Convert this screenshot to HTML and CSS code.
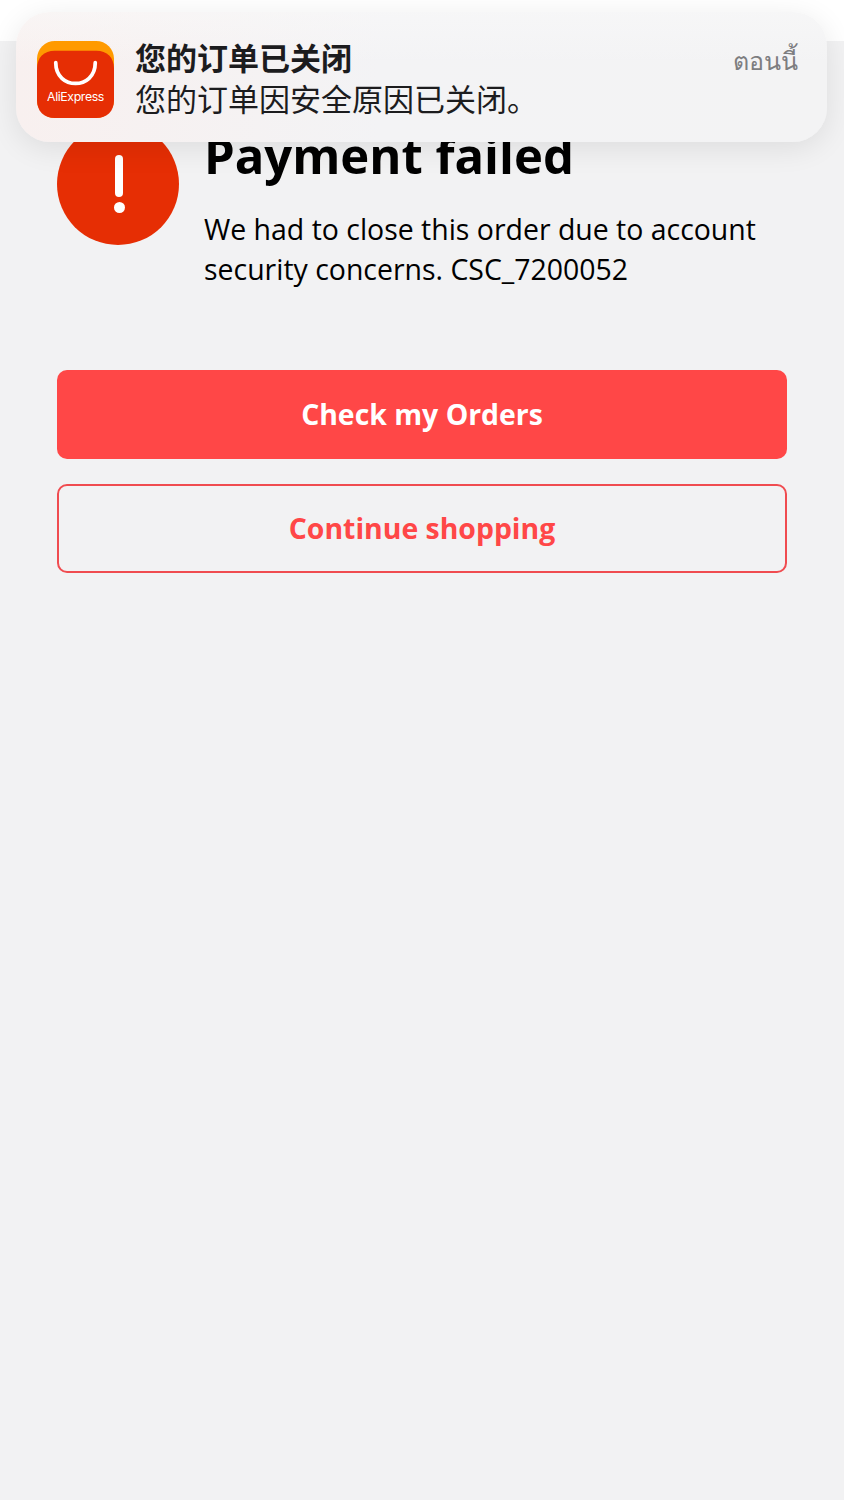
FILE: index.html
```html
<!DOCTYPE html>
<html lang="en">
<head>
    <meta charset="UTF-8">
    <meta name="viewport" content="width=device-width, initial-scale=1.0">
    <title>Payment failed</title>
    <link rel="stylesheet" href="styles.css">
</head>
<body>
    <div class="top-bar"></div>

    <!-- Push notification over the page -->
    <div class="notification">
        <svg class="app-icon" viewBox="0 0 78 78" aria-hidden="true">
            <rect width="78" height="78" rx="18" fill="#ff9a00"/>
            <path d="M0 28C0 17 7 10 18 10H60C71 10 78 17 78 28V60C78 71 71 78 60 78H18C7 78 0 71 0 60Z" fill="#e62e04"/>
            <path d="M19 22C19 50 59 50 59 22" fill="none" stroke="#fff" stroke-width="3.8" stroke-linecap="round"/>
            <text x="39" y="61" text-anchor="middle" class="app-icon-label">AliExpress</text>
        </svg>
        <div class="notification-text">
            <div class="notification-title">您的订单已关闭</div>
            <div class="notification-body">您的订单因安全原因已关闭。</div>
        </div>
        <div class="notification-time">ตอนนี้</div>
    </div>

    <div class="content">
        <div class="result">
            <div class="result-icon">
                <span class="result-icon-bar"></span>
                <span class="result-icon-dot"></span>
            </div>
            <div class="result-text">
                <h1>Payment failed</h1>
                <p>We had to close this order due to account security concerns. CSC_7200052</p>
            </div>
        </div>

        <div class="actions">
            <button class="btn btn-primary">Check my Orders</button>
            <button class="btn btn-outline">Continue shopping</button>
        </div>
    </div>
</body>
</html>
```

FILE: styles.css
```css
* {
    box-sizing: border-box;
    margin: 0;
    padding: 0;
}

body {
    position: relative;
    min-height: 1500px;
    background: #f2f2f3;
    font-family: "Open Sans", "Noto Sans", sans-serif;
    color: #000;
    overflow: hidden;
}

.top-bar {
    height: 41px;
    background: #fff;
}

/* Notification */
.notification {
    position: absolute;
    top: 12px;
    left: 16px;
    width: 811px;
    height: 130px;
    display: flex;
    padding: 29px 29px 0 21px;
    border-radius: 34px;
    background:
        linear-gradient(180deg, rgba(250, 250, 250, 0.5) 0%, rgba(250, 250, 250, 0) 40%),
        linear-gradient(90deg, #f8f0ef 0%, #f3f3f5 45%, #f3f3f4 100%);
    box-shadow: 0 6px 30px rgba(0, 0, 0, 0.09);
}

.app-icon {
    width: 77px;
    height: 77px;
    flex-shrink: 0;
}

.app-icon-label {
    font-family: "Inter", "Liberation Sans", sans-serif;
    font-size: 12.5px;
    letter-spacing: -0.4px;
    fill: #fff;
}

.notification-text {
    flex: 1;
    margin-top: -2px;
    margin-left: 21px;
    font-family: "Noto Sans CJK SC", sans-serif;
    font-size: 31px;
    color: #1c1c1e;
}

.notification-title {
    font-weight: 700;
    line-height: 36px;
}

.notification-body {
    font-weight: 400;
    line-height: 46px;
}

.notification-time {
    margin-top: 1px;
    font-family: "Noto Sans", "DejaVu Sans", sans-serif;
    font-size: 25px;
    font-weight: 500;
    line-height: 36px;
    color: #7d7d80;
}

/* Page content */
.content {
    padding: 82px 57px 0;
}

.result {
    display: flex;
    gap: 25px;
}

.result-icon {
    width: 122px;
    height: 122px;
    flex-shrink: 0;
    border-radius: 50%;
    background: #e62e04;
    display: flex;
    flex-direction: column;
    align-items: center;
    padding: 32px 0 0 2px;
}

.result-icon-bar {
    width: 8px;
    height: 42px;
    border-radius: 4px;
    background: #fff;
}

.result-icon-dot {
    width: 11px;
    height: 11px;
    margin-top: 5px;
    border-radius: 50%;
    background: #fff;
}

.result-text h1 {
    font-size: 49px;
    font-weight: 700;
    line-height: 64px;
    margin-bottom: 23px;
}

.result-text p {
    font-size: 28.45px;
    line-height: 39.5px;
}

.actions {
    margin-top: 81px;
    display: flex;
    flex-direction: column;
    gap: 25px;
}

.btn {
    height: 89px;
    border-radius: 10px;
    font-family: inherit;
    font-size: 28.4px;
    font-weight: 700;
    line-height: 36px;
    padding-bottom: 2px;
    background: transparent;
}

.btn-primary {
    border: none;
    background: #ff4747;
    color: #fff;
}

.btn-outline {
    border: 2px solid #f04c50;
    color: #ff4747;
}
```
